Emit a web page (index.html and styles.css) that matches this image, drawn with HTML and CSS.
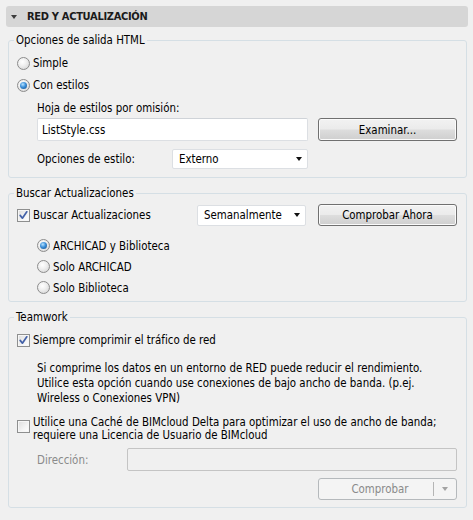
FILE: index.html
```html
<!DOCTYPE html>
<html lang="es">
<head>
<meta charset="utf-8">
<title>Red y Actualización</title>
<link rel="stylesheet" href="styles.css">
</head>
<body>
<div class="panel">
  <div class="header"><span class="tri"></span><span class="htitle">RED Y ACTUALIZACIÓN</span></div>

  <fieldset class="group g1">
    <legend>Opciones de salida HTML</legend>
    <div class="row rrow"><span class="radio"></span><span class="lab">Simple</span></div>
    <div class="row rrow"><span class="radio on"></span><span class="lab">Con estilos</span></div>
    <div class="indent">
      <div class="hoja">Hoja de estilos por omisión:</div>
      <div class="row field-row">
        <div class="input">ListStyle.css</div>
        <div class="btn">Examinar...</div>
      </div>
      <div class="row style-row">
        <span class="style-lbl">Opciones de estilo:</span>
        <div class="select sel-ext"><span>Externo</span><span class="arrow"></span></div>
      </div>
    </div>
  </fieldset>

  <fieldset class="group g2">
    <legend>Buscar Actualizaciones</legend>
    <div class="row upd-row">
      <span class="check on"><svg viewBox="0 0 13 13" width="13" height="13"><path d="M3.2 6.4 L5.4 9.2 L9.8 2.8" fill="none" stroke="#4361a8" stroke-width="1.7" stroke-linecap="round" stroke-linejoin="round"/></svg></span>
      <span class="lab upd-lab">Buscar Actualizaciones</span>
      <div class="select sel-sem"><span>Semanalmente</span><span class="arrow"></span></div>
      <div class="btn">Comprobar Ahora</div>
    </div>
    <div class="indent radios">
      <div class="row srow"><span class="radio on"></span><span class="lab">ARCHICAD y Biblioteca</span></div>
      <div class="row srow"><span class="radio"></span><span class="lab">Solo ARCHICAD</span></div>
      <div class="row srow"><span class="radio"></span><span class="lab">Solo Biblioteca</span></div>
    </div>
  </fieldset>

  <fieldset class="group g3">
    <legend>Teamwork</legend>
    <div class="row comp-row">
      <span class="check on"><svg viewBox="0 0 13 13" width="13" height="13"><path d="M3.2 6.4 L5.4 9.2 L9.8 2.8" fill="none" stroke="#4361a8" stroke-width="1.7" stroke-linecap="round" stroke-linejoin="round"/></svg></span>
      <span class="lab">Siempre comprimir el tráfico de red</span>
    </div>
    <p class="note indent">Si comprime los datos en un entorno de RED puede reducir el rendimiento.<br>Utilice esta opción cuando use conexiones de bajo ancho de banda. (p.ej.<br>Wireless o Conexiones VPN)</p>
    <div class="cache-row">
      <span class="check"></span>
      <span class="cache-text">Utilice una Caché de BIMcloud Delta para optimizar el uso de ancho de banda;<br>requiere una Licencia de Usuario de BIMcloud</span>
    </div>
    <div class="row dir-row indent">
      <span class="dir-lbl">Dirección:</span>
      <div class="input disabled"></div>
    </div>
    <div class="row split-row">
      <div class="split"><span class="split-main">Comprobar</span><span class="split-arrow"><span class="arrow grey"></span></span></div>
    </div>
  </fieldset>
</div>
</body>
</html>
```

FILE: styles.css
```css
html, body {
  margin: 0;
  padding: 0;
  background: #f0f0f0;
}

body {
  font-family: "DejaVu Sans Condensed", "DejaVu Sans", sans-serif;
  font-stretch: semi-condensed;
  font-size: 11.4px;
  color: #000;
}

.panel {
  padding: 6px 5px 0 6px;
}

.header {
  height: 21px;
  background: #d6d6d6;
  border-radius: 3px;
  display: flex;
  align-items: center;
  padding-left: 5px;
}

.tri {
  width: 0;
  height: 0;
  border-left: 3px solid transparent;
  border-right: 3px solid transparent;
  border-top: 4px solid #3c3c3c;
  margin-right: 10px;
}

.htitle {
  font-weight: bold;
  font-size: 11px;
  letter-spacing: -0.3px;
  color: #1a1a1a;
}

.group {
  margin: 7px 1px 0 2px;
  padding: 5px 8px 8px 8px;
  border: 1px solid #d5dfe5;
  border-radius: 3px;
  min-width: 0;
}

.group legend {
  padding: 0 2px;
  margin-left: -3px;
  line-height: 13px;
  height: 13px;
}

.g2, .g3 {
  margin-top: 9px;
}

.row {
  display: flex;
  align-items: center;
}

.lab {
  margin-left: 3px;
  white-space: nowrap;
}

.rrow {
  height: 22px;
}

.indent {
  margin-left: 20px;
}

.hoja {
  height: 20px;
  line-height: 20px;
  margin-top: 2px;
}

.field-row {
  height: 23px;
}

.input {
  box-sizing: border-box;
  width: 271px;
  height: 23px;
  background: #fff;
  border: 1px solid #dcdfe3;
  border-top-color: #cfd3d8;
  border-radius: 2px;
  padding-left: 4px;
  display: flex;
  align-items: center;
}

.btn {
  box-sizing: border-box;
  width: 139px;
  height: 23px;
  margin-left: 10px;
  border: 1px solid #707070;
  border-radius: 3px;
  background: linear-gradient(#f2f2f2 0%, #ebebeb 48%, #dddddd 52%, #cfcfcf 100%);
  box-shadow: inset 0 0 0 1px #fbfbfb;
  display: flex;
  align-items: center;
  justify-content: center;
}

.style-row {
  height: 20px;
  margin-top: 8px;
}

.style-lbl {
  width: 135px;
}

.select {
  box-sizing: border-box;
  height: 20px;
  background: #fff;
  border: 1px solid #dcdfe3;
  border-radius: 2px;
  padding: 0 5px 0 6px;
  display: flex;
  align-items: center;
  justify-content: space-between;
}

.sel-ext {
  width: 136px;
}

.arrow {
  width: 0;
  height: 0;
  border-left: 3.5px solid transparent;
  border-right: 3.5px solid transparent;
  border-top: 4px solid #111;
}

.arrow.grey {
  border-top-color: #a3a3a3;
}

/* group 2 */
.g2 {
  padding-top: 4px;
  padding-bottom: 3px;
}

.upd-row {
  height: 22px;
}

.upd-lab {
  width: 164px;
}

.sel-sem {
  width: 109px;
  height: 21px;
  margin-left: 0;
}

.upd-row .btn {
  margin-left: 12px;
  height: 22px;
}

.radios {
  margin-top: 9px;
}

.srow {
  height: 21px;
}

.radio {
  position: relative;
  box-sizing: border-box;
  width: 13px;
  height: 13px;
  flex: none;
  border-radius: 50%;
  border: 1px solid #8c8c8c;
  background: radial-gradient(circle at 40% 35%, #ffffff 0%, #f0f0f0 40%, #cfcfcf 100%);
}

.radio.on::after {
  content: "";
  position: absolute;
  left: 2px;
  top: 2px;
  width: 7px;
  height: 7px;
  border-radius: 50%;
  background: radial-gradient(circle at 40% 35%, #b8e3ff 0%, #3b8fd9 45%, #124a86 100%);
}

.check {
  box-sizing: border-box;
  width: 13px;
  height: 13px;
  flex: none;
  border: 1px solid #8e8f8f;
  background: linear-gradient(135deg, #dcdcdc 0%, #f4f4f4 60%, #ffffff 100%);
  box-shadow: inset 0 0 0 1px #f6f6f6;
  position: relative;
}

.check svg {
  position: absolute;
  left: -1px;
  top: -1px;
}

/* group 3 */
.g3 {
  padding-top: 6px;
  padding-bottom: 7px;
}

.comp-row {
  height: 20px;
}

.note {
  margin: 11px 0 0 20px;
  line-height: 15px;
}

.cache-row {
  display: flex;
  align-items: flex-start;
  margin-top: 10px;
  line-height: 13px;
}

.cache-row .check {
  margin-top: 4px;
}

.cache-text {
  margin-left: 3px;
}

.dir-row {
  height: 23px;
  margin-top: 6px;
}

.dir-lbl {
  width: 90px;
  color: #8a8a8a;
}

.input.disabled {
  width: 330px;
  background: #f0f0f0;
  border-color: #c4c4c4;
}

.split-row {
  height: 22px;
  margin-top: 7px;
  justify-content: flex-start;
  padding-left: 301px;
}

.split {
  box-sizing: border-box;
  width: 139px;
  height: 22px;
  border: 1px solid #b5b9bc;
  border-radius: 3px;
  background: #f4f4f4;
  display: flex;
  align-items: center;
  color: #8a8a8a;
}

.split-main {
  flex: 1;
  text-align: center;
  padding-left: 8px;
}

.split-arrow {
  width: 22px;
  height: 14px;
  border-left: 1px solid #b5b5b5;
  display: flex;
  align-items: center;
  justify-content: center;
}
```
